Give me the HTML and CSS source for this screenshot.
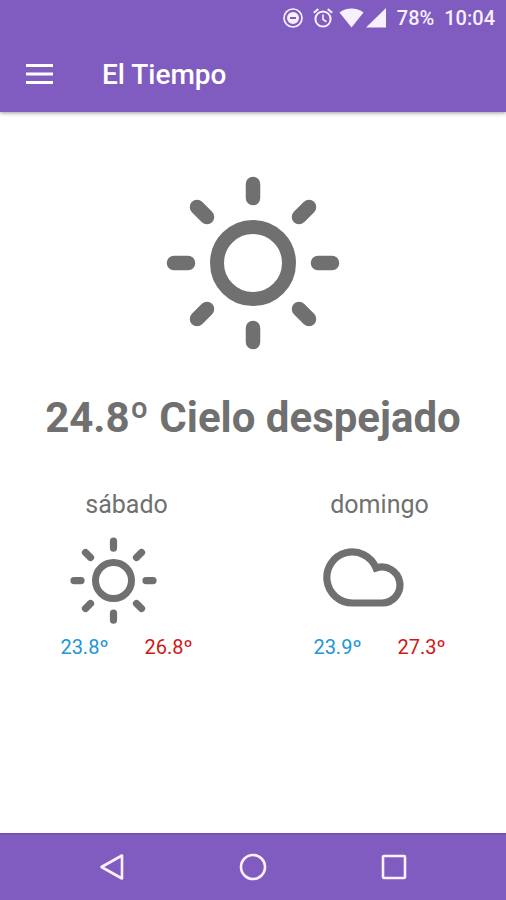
FILE: index.html
```html
<!DOCTYPE html>
<html lang="es">
<head>
    <meta charset="UTF-8">
    <meta name="viewport" content="width=device-width, initial-scale=1.0">
    <title>El Tiempo</title>
    <link rel="stylesheet" href="styles.css">
</head>
<body>
    <svg class="sprite" aria-hidden="true">
        <symbol id="sun" viewBox="0 0 174 174">
            <circle cx="87" cy="87" r="36" fill="none" stroke="currentColor" stroke-width="14"/>
            <path d="M87 8v14M87 152v14M8 87h14M152 87h14M31 31l10 10M133 133l10 10M31 143l10-10M133 41l10-10" fill="none" stroke="currentColor" stroke-width="14.5" stroke-linecap="round"/>
        </symbol>
        <symbol id="cloud" viewBox="0 0 87 87">
            <path d="M29.5 66A25.5 25.5 0 1 1 53 31A18 18 0 1 1 59 66Z" fill="none" stroke="currentColor" stroke-width="7.2"/>
        </symbol>
    </svg>

    <header class="top">
        <div class="status">
            <svg class="status-icon" width="20" height="20" viewBox="0 0 20 20" aria-hidden="true">
                <circle cx="10" cy="10" r="9" fill="none" stroke="currentColor" stroke-width="1.7"/>
                <path fill="currentColor" fill-rule="evenodd" d="M10 4a6 6 0 1 0 0 12a6 6 0 0 0 0-12zM7 9h6v2H7z"/>
            </svg>
            <svg class="status-icon alarm" width="20" height="20" viewBox="0 0 20 20" fill="none" stroke="currentColor" aria-hidden="true">
                <circle cx="10" cy="11" r="7.6" stroke-width="2"/>
                <path d="M10 6.500v5l3.500 2.200" stroke-width="1.600"/>
                <path d="M.8 4.800L5.300 1M19.200 4.800L14.700 1" stroke-width="2"/>
            </svg>
            <svg class="status-icon" width="25" height="20" viewBox="0 0 25 20" aria-hidden="true">
                <path fill="currentColor" d="M.5 4.500C7-.7 18-.7 24.500 4.500L12.500 19.500z"/>
            </svg>
            <svg class="status-icon signal" width="20" height="20" viewBox="0 0 20 20" aria-hidden="true">
                <path fill="currentColor" d="M0 19.500L20 0v19.500z"/>
            </svg>
            <span class="battery">78%</span>
            <span class="clock">10:04</span>
        </div>
        <div class="toolbar">
            <button class="menu" type="button" aria-label="Menú">
                <svg width="28" height="20" viewBox="0 0 28 20" aria-hidden="true">
                    <path d="M0 1.500h27M0 10h27M0 18.500h27" stroke="currentColor" stroke-width="3"/>
                </svg>
            </button>
            <h1>El Tiempo</h1>
        </div>
    </header>

    <main>
        <svg class="today-icon" aria-hidden="true"><use href="#sun"/></svg>
        <h2>24.8º Cielo despejado</h2>
        <div class="forecast">
            <section class="day">
                <h3>sábado</h3>
                <svg class="day-icon" aria-hidden="true"><use href="#sun"/></svg>
                <div class="temps">
                    <span class="min">23.8º</span>
                    <span class="max">26.8º</span>
                </div>
            </section>
            <section class="day">
                <h3>domingo</h3>
                <svg class="day-icon" aria-hidden="true"><use href="#cloud"/></svg>
                <div class="temps">
                    <span class="min">23.9º</span>
                    <span class="max">27.3º</span>
                </div>
            </section>
        </div>
    </main>

    <nav class="navbar">
        <button type="button" aria-label="Atrás">
            <svg width="28" height="28" viewBox="0 0 28 28" aria-hidden="true">
                <path d="M3.500 14L24 2.500v23z" fill="none" stroke="currentColor" stroke-width="2.600" stroke-linejoin="round"/>
            </svg>
        </button>
        <button type="button" aria-label="Inicio">
            <svg width="28" height="28" viewBox="0 0 28 28" aria-hidden="true">
                <circle cx="14" cy="14" r="12" fill="none" stroke="currentColor" stroke-width="2.600"/>
            </svg>
        </button>
        <button type="button" aria-label="Recientes">
            <svg width="28" height="28" viewBox="0 0 28 28" aria-hidden="true">
                <rect x="3" y="3" width="22" height="22" rx="1" fill="none" stroke="currentColor" stroke-width="2.600"/>
            </svg>
        </button>
    </nav>
</body>
</html>
```

FILE: styles.css
```css
* {
    box-sizing: border-box;
}

body {
    margin: 0;
    min-height: 100vh;
    display: flex;
    flex-direction: column;
    font-family: Roboto, 'Liberation Sans', sans-serif;
    background: #fff;
    color: #707070;
}

h1, h2, h3 {
    margin: 0;
}

svg {
    display: block;
}

button {
    padding: 0;
    border: none;
    background: none;
    color: inherit;
    cursor: pointer;
}

.sprite {
    position: absolute;
    width: 0;
    height: 0;
}

.top {
    background: #805cc0;
    color: #fff;
    box-shadow: 0 1px 4px rgba(0, 0, 0, 0.4);
}

.status {
    height: 36px;
    padding: 0 11px;
    display: flex;
    justify-content: flex-end;
    align-items: center;
    font-size: 20px;
    font-weight: 500;
    color: #f7f0ff;
}

.alarm {
    margin: 0 6px 0 10px;
}

.signal {
    margin-left: 2px;
}

.battery {
    margin: 0 10px 0 11px;
}

.toolbar {
    height: 76px;
    padding: 0 26px;
    display: flex;
    align-items: center;
    gap: 48px;
}

h1 {
    font-size: 28px;
    font-weight: 500;
}

main {
    flex: 1;
    display: flex;
    flex-direction: column;
    align-items: center;
    padding-top: 64px;
}

.today-icon {
    width: 174px;
    height: 174px;
}

h2 {
    margin-top: 40px;
    font-size: 42px;
    line-height: 56px;
    font-weight: 700;
    text-align: center;
}

.forecast {
    width: 100%;
    margin-top: 43px;
    display: grid;
    grid-template-columns: 1fr 1fr;
}

.day {
    display: flex;
    flex-direction: column;
    align-items: center;
}

h3 {
    font-size: 25px;
    line-height: 32px;
    font-weight: 400;
}

.day-icon {
    width: 87px;
    height: 87px;
    margin: 16px 26px 9px 0;
}

.temps {
    display: flex;
    gap: 36px;
    font-size: 20px;
    line-height: 28px;
}

.min {
    color: #2196d3;
}

.max {
    color: #d01818;
}

.navbar {
    height: 67px;
    padding: 0 42px;
    display: grid;
    grid-template-columns: repeat(3, 1fr);
    align-items: center;
    background: #805cc0;
    box-shadow: inset 0 2px #744fb5;
    color: #fbf0ff;
}

.navbar button {
    display: flex;
    justify-content: center;
}
```
